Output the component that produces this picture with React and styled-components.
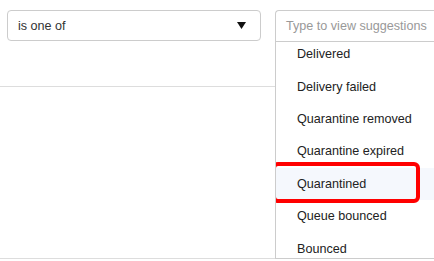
import React from "react";
import styled, { createGlobalStyle } from "styled-components";

const Global = createGlobalStyle`
  html, body { margin: 0; padding: 0; background: #fff; }
  body { font-family: "Liberation Sans", Arial, sans-serif; width: 434px; height: 261px; overflow: hidden; }
`;

const Page = styled.div`
  position: relative;
  width: 434px;
  height: 261px;
  overflow: hidden;
`;

const Toolbar = styled.div`
  display: flex;
  align-items: flex-start;
  padding: 10px 0 0 7px;
  height: 86px;
  box-sizing: border-box;
`;

const Select = styled.div`
  flex: 0 0 254px;
  height: 31px;
  box-sizing: border-box;
  border: 1px solid #cccccc;
  border-radius: 4px;
  display: flex;
  align-items: center;
  justify-content: space-between;
  padding: 0 14px 0 10px;
  font-size: 12.6px;
  color: #333;
`;

const Arrow = styled.svg`
  width: 9px;
  height: 7px;
  display: block;
`;

const Combo = styled.div`
  position: relative;
  flex: 0 0 170px;
  margin-left: 14px;
`;

const Input = styled.div`
  position: relative;
  z-index: 2;
  height: 32px;
  box-sizing: border-box;
  border: 1px solid #cccccc;
  border-right: none;
  border-radius: 4px 0 0 0;
  background: #fff;
  display: flex;
  align-items: center;
  padding-left: 10px;
  font-size: 12.6px;
  color: #999;
  white-space: nowrap;
`;

const Menu = styled.ul`
  position: absolute;
  z-index: 1;
  top: 28px;
  left: 0;
  width: 170px;
  height: 221px;
  margin: 0;
  padding: 0;
  list-style: none;
  background: #fff;
  border-left: 1px solid #cccccc;
  border-bottom: 1px solid #cccccc;
  box-sizing: border-box;
  overflow: hidden;
`;

const Item = styled.li`
  height: 32.43px;
  display: flex;
  align-items: center;
  padding-left: 21px;
  font-size: 12.6px;
  color: #222;
  white-space: nowrap;
  background: ${(p) => (p.$active ? "#f5f8fd" : "transparent")};
  position: relative;
`;

const Highlight = styled.div`
  position: absolute;
  left: -4px;
  top: -6px;
  width: 148px;
  height: 41px;
  box-sizing: border-box;
  border: 4px solid #ff0000;
  border-radius: 6px;
`;

const Panel = styled.div`
  height: 173px;
  box-sizing: border-box;
  border-top: 1px solid #dddddd;
  border-bottom: 1px solid #dddddd;
`;

const items = [
  "Delivered",
  "Delivery failed",
  "Quarantine removed",
  "Quarantine expired",
  "Quarantined",
  "Queue bounced",
  "Bounced",
];

export default function App() {
  return (
    <Page>
      <Global />
      <Toolbar>
        <Select>
          <span>is one of</span>
          <Arrow viewBox="0 0 9 7">
            <polygon points="0,0 9,0 4.5,7" fill="#111" />
          </Arrow>
        </Select>
        <Combo>
          <Input>Type to view suggestions</Input>
          <Menu>
            {items.map((t) => (
              <Item key={t} $active={t === "Quarantined"}>
                {t}
                {t === "Quarantined" && <Highlight />}
              </Item>
            ))}
          </Menu>
        </Combo>
      </Toolbar>
      <Panel />
    </Page>
  );
}
